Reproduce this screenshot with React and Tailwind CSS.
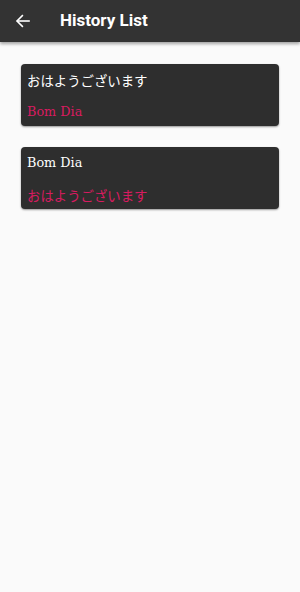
import React from 'react';

const items = [
  { source: 'おはようございます', target: 'Bom Dia' },
  { source: 'Bom Dia', target: 'おはようございます' },
];

// Japanese runs a touch larger than the serif Latin text
const Line = ({ text, color }) => {
  const isJa = /[^\x00-\x7f]/.test(text);
  return (
    <div
      className={
        isJa
          ? `${color} text-[13.4px] leading-[20px] font-['Noto_Sans_CJK_JP',sans-serif]`
          : `${color} text-[12.8px] leading-[20px] font-['DejaVu_Serif',serif]`
      }
    >
      {text}
    </div>
  );
};

const HistoryCard = ({ source, target }) => (
  <div className="bg-[#2e2e2e] rounded-[4px] shadow-[0_1px_2px_rgba(0,0,0,0.4)] px-[6px] pt-[6px] pb-[4px] h-[62px] flex flex-col gap-[12px]">
    <Line text={source} color="text-white" />
    <Line text={target} color="text-[#d81b60]" />
  </div>
);

export default function App() {
  return (
    <div className="w-[300px] h-[592px] bg-[#fafafa] flex flex-col">
      <div className="h-[42px] bg-[#333333] flex items-center shadow-[0_2px_3px_rgba(0,0,0,0.35)] shrink-0">
        <svg className="ml-[15px]" width="16" height="16" viewBox="0 0 24 24" fill="none" stroke="white" strokeWidth="2.4" strokeLinecap="square">
          <path d="M21 12H4" />
          <path d="M11 4l-8 8 8 8" />
        </svg>
        <span className="ml-[29px] text-white text-[17px] font-bold font-['Roboto',sans-serif]">History List</span>
      </div>
      <div className="px-[21px] pt-[22px] flex flex-col gap-[21px]">
        {items.map((it, i) => (
          <HistoryCard key={i} {...it} />
        ))}
      </div>
    </div>
  );
}
